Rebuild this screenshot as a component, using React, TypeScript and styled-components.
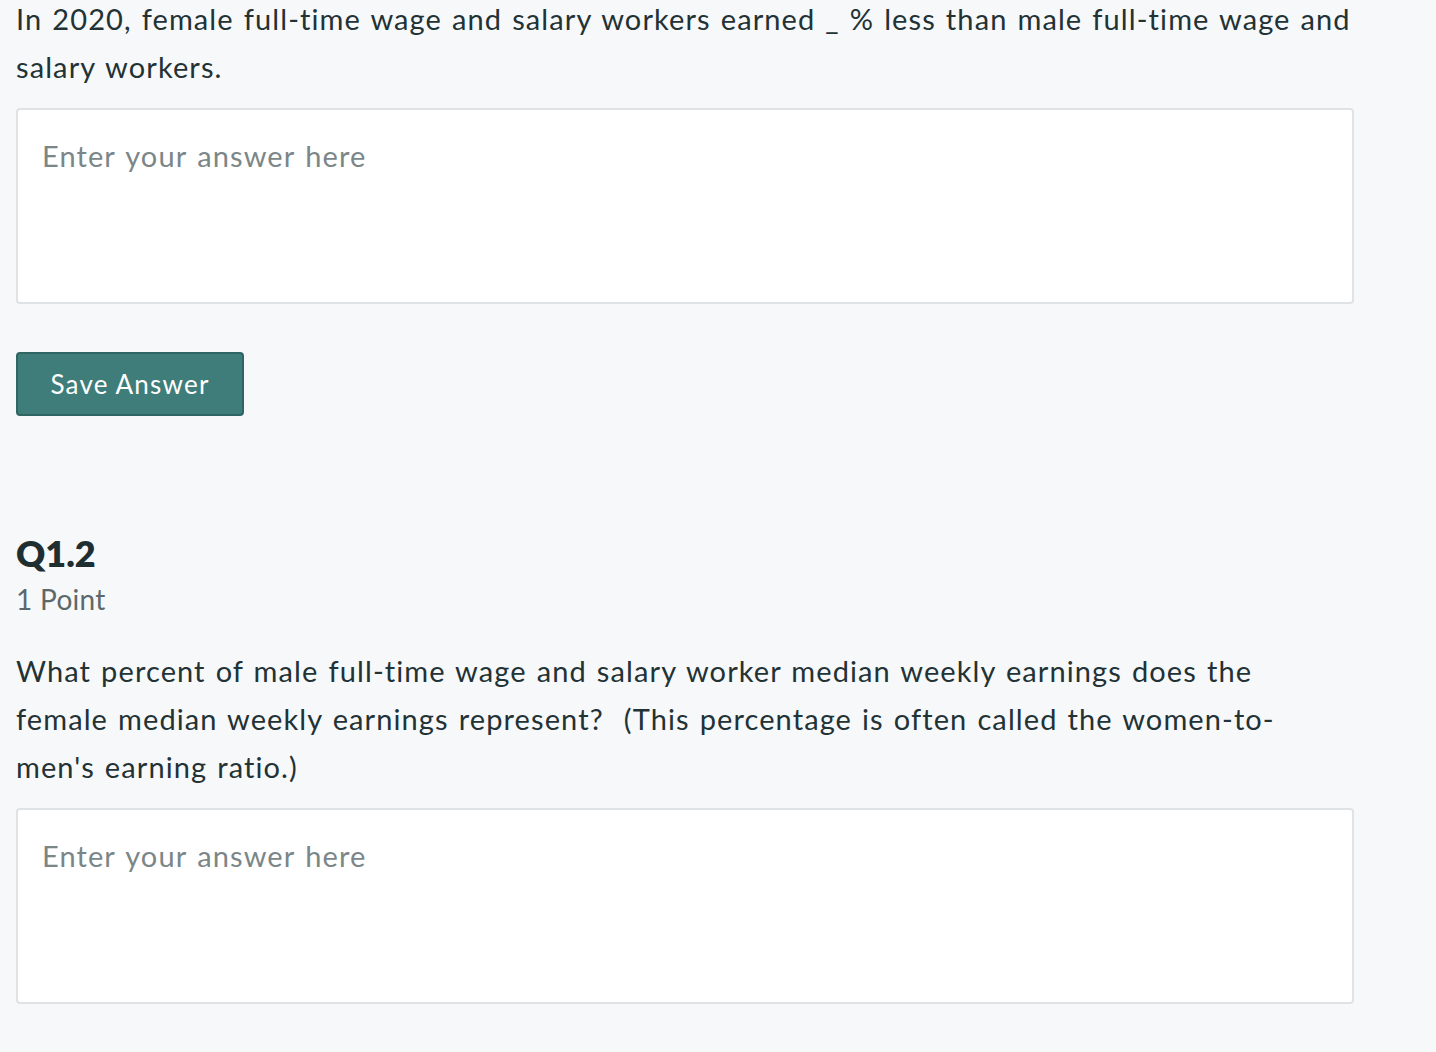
import React from "react";
import styled, {createGlobalStyle} from "styled-components";

const GlobalStyle = createGlobalStyle`
  html, body {
    margin: 0;
    padding: 0;
    background: #f7f8fa;
  }

  body {
    font-family: Lato, "Noto Sans", "Liberation Sans", sans-serif;
    color: #223235;
  }
`;

const Page = styled.main`
  padding: 0 82px 0 16px;
  margin-top: -5px;
  min-height: 1060px;
`;

// line breaks follow the original layout, so the text never rewraps differently
const Prompt = styled.p`
  margin: 0;
  font-size: 29px;
  line-height: 48px;
  letter-spacing: 1.1px;
  word-spacing: 1.5px;
  white-space: nowrap;
  color: #223235;
`;

const AnswerBox = styled.textarea`
  display: block;
  box-sizing: border-box;
  width: 100%;
  height: 196px;
  margin: 17px 0 0;
  padding: 22px 24px;
  border: 2px solid #dfe3e6;
  border-radius: 4px;
  background: #fff;
  font-family: inherit;
  font-size: 29px;
  line-height: 48px;
  letter-spacing: 1.1px;
  word-spacing: 2px;
  color: #223235;
  resize: none;
  outline: none;

  &::placeholder {
    color: #7b8688;
    opacity: 1;
  }
`;

const SaveButton = styled.button`
  display: block;
  box-sizing: border-box;
  width: 228px;
  height: 64px;
  margin-top: 48px;
  padding: 0;
  border: 2px solid #2f6562;
  border-radius: 4px;
  background: #3e7d79;
  color: #fff;
  font-family: inherit;
  font-size: 26px;
  letter-spacing: 1.2px;
  cursor: pointer;
`;

const QuestionHeader = styled.header`
  margin-top: 116px;
  margin-bottom: 24px;
`;

const QuestionTitle = styled.h2`
  margin: 0;
  font-size: 36px;
  line-height: 43px;
  font-weight: 800;
  color: #1f2e30;
`;

const Points = styled.div`
  font-size: 28px;
  line-height: 48px;
  color: #5d686b;
  letter-spacing: 0.3px;
`;

const App: React.FC = () => (
    <>
        <GlobalStyle/>
        <Page>
            <Prompt>
                In 2020, female full-time wage and salary workers earned _ % less than male full-time wage and<br/>
                salary workers.
            </Prompt>
            <AnswerBox placeholder="Enter your answer here" aria-label="Answer for question 1.1"/>
            <SaveButton type="button">Save Answer</SaveButton>

            <QuestionHeader>
                <QuestionTitle>Q1.2</QuestionTitle>
                <Points>1 Point</Points>
            </QuestionHeader>
            <Prompt>
                What percent of male full-time wage and salary worker median weekly earnings does the<br/>
                female median weekly earnings represent?&nbsp; (This percentage is often called the women-to-<br/>
                men's earning ratio.)
            </Prompt>
            <AnswerBox placeholder="Enter your answer here" aria-label="Answer for question 1.2"/>
        </Page>
    </>
);

export default App;
